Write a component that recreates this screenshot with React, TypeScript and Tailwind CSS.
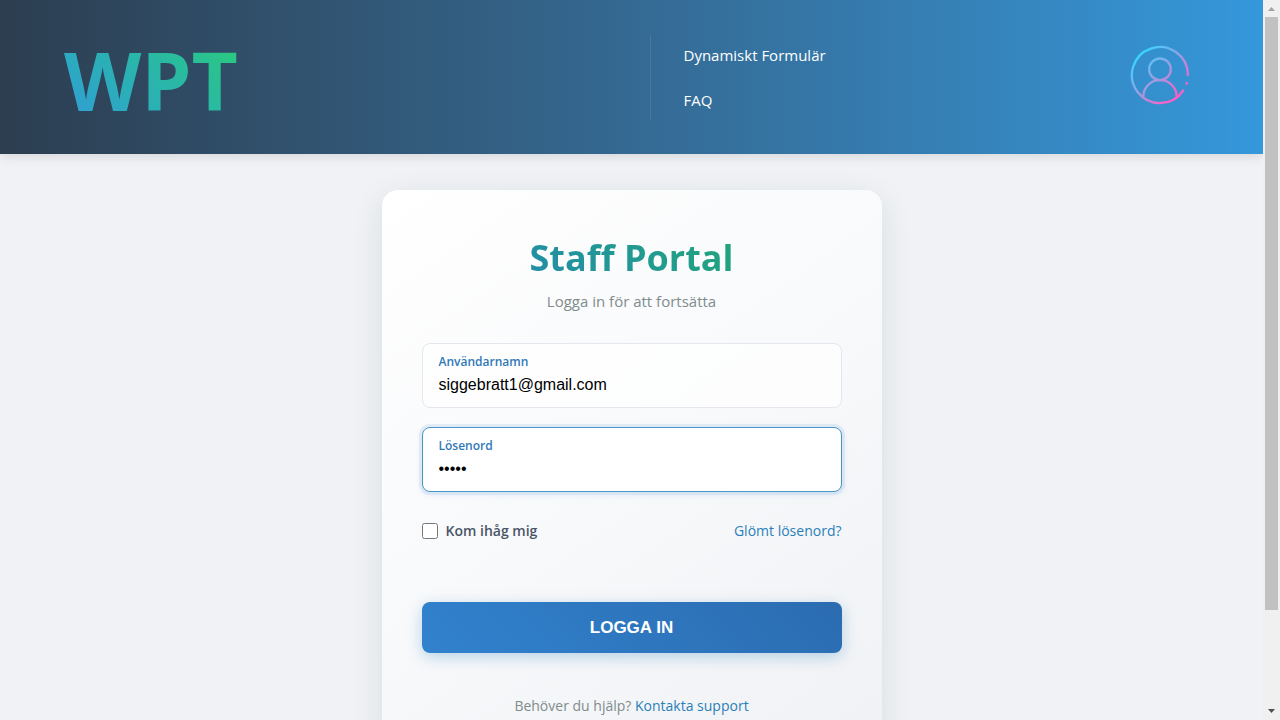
import { useState } from "react";
import type { ReactNode } from "react";

const fontBody = "font-['Open_Sans','Noto_Sans',sans-serif]";
const fontControl = "font-['Liberation_Sans',Arial,sans-serif]";

function UserIcon() {
  return (
    <svg viewBox="0 0 60 60" className="size-15" fill="none" strokeWidth="2.3" strokeLinecap="round" aria-hidden="true">
      <defs>
        <linearGradient id="userGradient" gradientUnits="userSpaceOnUse" x1="10" y1="10" x2="46" y2="50">
          <stop offset="0" stopColor="#3ad3ff" />
          <stop offset="0.5" stopColor="#9a9fe2" />
          <stop offset="1" stopColor="#ff5fc4" />
        </linearGradient>
      </defs>
      <g stroke="url(#userGradient)">
        <path d="M57.9 30A28 28 0 1 0 53.3 45.4" />
        <path d="M56.8 37.9L56.6 38.6" />
        <circle cx="30" cy="24.3" r="10.8" />
        <path d="M13.3 52.6V51.5a16.7 16.3 0 0 1 33.4 0V52.6" />
      </g>
    </svg>
  );
}

function Header() {
  return (
    <header className="relative flex h-[154px] shrink-0 items-center bg-linear-to-r from-[#2c3e50] to-[#3498db] px-16 shadow-[0_2px_12px_rgba(0,0,0,0.12)]">
      <a href="#start" className="flex flex-1 pt-1.5 text-[80px] leading-[120px] font-bold">
        <span className="bg-linear-45 from-[#3498db] to-[#2ecc71] bg-clip-text text-transparent">WPT</span>
      </a>
      <div className="flex flex-1 items-center justify-between pl-9">
        <nav className="flex flex-col gap-[21px] border-l border-white/10 pt-2 pb-2 pl-[33px] text-[15px] leading-6 font-medium text-white">
          <a href="#formular">Dynamiskt Formulär</a>
          <a href="#faq">FAQ</a>
        </nav>
        <button type="button" aria-label="Konto" className="mr-[9px] mb-1">
          <UserIcon />
        </button>
      </div>
    </header>
  );
}

type FieldProps = { id: string; label: string; active?: boolean; children: ReactNode };

function Field({ id, label, active, children }: FieldProps) {
  return (
    <div
      className={
        active
          ? "flex h-[65px] flex-col rounded-lg border border-[#4a96c8] bg-white px-4 pt-2 shadow-[0_0_0_3px_rgba(49,130,206,0.1),0_2px_8px_rgba(49,130,206,0.12)]"
          : "flex h-[65px] flex-col rounded-lg border border-[#e4e8ee] bg-white/70 px-4 pt-2"
      }
    >
      <label htmlFor={id} className="text-xs leading-5 font-semibold text-[#3079b8]">
        {label}
      </label>
      {children}
    </div>
  );
}

function LoginCard() {
  const [user, setUser] = useState("siggebratt1@gmail.com");
  const [password, setPassword] = useState("abcde");
  const inputClass = `h-[26px] w-full bg-transparent text-base text-black outline-none ${fontControl}`;

  return (
    <section className="w-full max-w-[500px] rounded-2xl bg-linear-145 from-white via-[#f8f9fb] to-[#f0f1f4] p-10 shadow-[0_8px_32px_rgba(31,45,61,0.1)]">
      <h1 className="bg-linear-45 from-[#2980b9] to-[#27ae60] bg-clip-text text-center text-4xl leading-14 font-bold text-transparent">
        Staff Portal
      </h1>
      <p className="mt-[3px] text-center text-[15px] leading-6 text-[#7f8c8d]">Logga in för att fortsätta</p>
      <form className="mt-[30px]" onSubmit={(e) => e.preventDefault()}>
        <div className="flex flex-col gap-[19px]">
          <Field id="user" label="Användarnamn">
            <input id="user" type="text" value={user} onChange={(e) => setUser(e.target.value)} className={inputClass} />
          </Field>
          <Field id="password" label="Lösenord" active>
            <input id="password" type="password" value={password} onChange={(e) => setPassword(e.target.value)} className={inputClass} />
          </Field>
        </div>
        <div className="mt-[27px] flex items-center justify-between text-sm leading-6">
          <label className="flex items-center gap-2 font-semibold text-[#4a5568]">
            <input type="checkbox" className="size-4" />
            Kom ihåg mig
          </label>
          <a href="#losenord" className="text-[#2980b9]">
            Glömt lösenord?
          </a>
        </div>
        <button
          type="submit"
          className={`mt-[59px] h-[51px] w-full rounded-lg bg-linear-45 from-[#3182ce] to-[#2b6cb0] text-[17px] font-bold text-white shadow-[0_4px_15px_rgba(41,128,185,0.3)] ${fontControl}`}
        >
          LOGGA IN
        </button>
      </form>
      <p className="mt-[41px] text-center text-sm leading-6 text-[#7f8c8d]">
        Behöver du hjälp?{" "}
        <a href="#support" className="text-[#2980b9]">
          Kontakta support
        </a>
      </p>
    </section>
  );
}

function ScrollBar() {
  return (
    <div className="flex w-[17px] shrink-0 flex-col items-center bg-[#f0f0f0]" aria-hidden="true">
      <svg viewBox="0 0 17 17" className="size-[17px] shrink-0" fill="#a3a3a3">
        <path d="M5 11L8.5 7L12 11Z" />
      </svg>
      <div className="flex w-[13px] flex-1 flex-col">
        <div className="h-[86.5%] bg-[#c1c1c1]" />
      </div>
      <svg viewBox="0 0 17 17" className="size-[17px] shrink-0" fill="#505050">
        <path d="M5 6L12 6L8.5 10Z" />
      </svg>
    </div>
  );
}

export default function App() {
  return (
    <div className={`flex h-screen overflow-hidden ${fontBody}`}>
      <div className="flex min-w-0 flex-1 flex-col overflow-hidden bg-[#f0f2f5]">
        <Header />
        <main className="flex justify-center px-4 pt-9">
          <LoginCard />
        </main>
      </div>
      <ScrollBar />
    </div>
  );
}
